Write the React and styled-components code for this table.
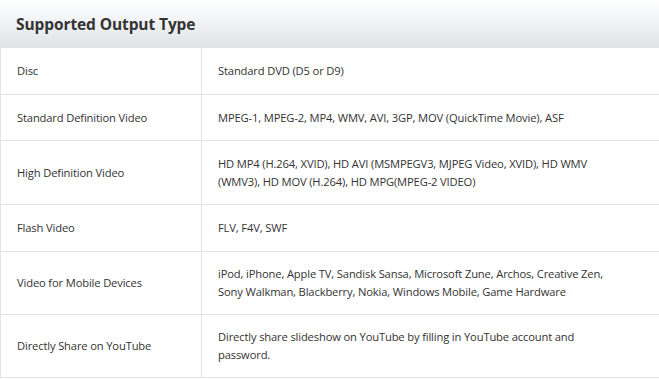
import React from 'react';
import styled, { createGlobalStyle } from 'styled-components';

const GlobalStyle = createGlobalStyle`
  html, body {
    margin: 0;
    padding: 0;
    background: #fff;
  }
`;

const rows = [
  { type: 'Disc', formats: 'Standard DVD (D5 or D9)', height: 47 },
  { type: 'Standard Definition Video', formats: 'MPEG-1, MPEG-2, MP4, WMV, AVI, 3GP, MOV (QuickTime Movie), ASF', height: 46 },
  { type: 'High Definition Video', formats: 'HD MP4 (H.264, XVID), HD AVI (MSMPEGV3, MJPEG Video, XVID), HD WMV (WMV3), HD MOV (H.264), HD MPG(MPEG-2 VIDEO)', height: 64 },
  { type: 'Flash Video', formats: 'FLV, F4V, SWF', height: 47 },
  { type: 'Video for Mobile Devices', formats: 'iPod, iPhone, Apple TV, Sandisk Sansa, Microsoft Zune, Archos, Creative Zen, Sony Walkman, Blackberry, Nokia, Windows Mobile, Game Hardware', height: 63 },
  { type: 'Directly Share on YouTube', formats: 'Directly share slideshow on YouTube by filling in YouTube account and password.', height: 63 },
];

const Wrapper = styled.div`
  width: 659px;
  font-family: "Open Sans", "DejaVu Sans", sans-serif;
  color: #333;
`;

const Header = styled.div`
  height: 48px;
  display: flex;
  align-items: center;
  padding: 0 16px;
  box-sizing: border-box;
  background: linear-gradient(to bottom, #ffffff 0%, #dfe3e6 100%);
  font-size: 15.5px;
  font-weight: 700;
  letter-spacing: -0.1px;
  color: #333;
`;

const Table = styled.div`
  border-left: 1px solid #e4e4e4;
`;

const Row = styled.div`
  display: grid;
  grid-template-columns: 200px 1fr;
  height: ${props => props.h}px;
  border-bottom: 1px solid #e4e4e4;
  box-sizing: border-box;
`;

const Cell = styled.div`
  display: flex;
  align-items: center;
  padding: 0 16px;
  font-size: 11.2px;
  letter-spacing: -0.15px;
  line-height: 18px;
`;

const ValueCell = styled(Cell)`
  padding-right: 48px;
  border-left: 1px solid #e4e4e4;
`;

export default function App() {
  return (
    <>
      <GlobalStyle />
      <Wrapper>
        <Header>Supported Output Type</Header>
        <Table>
          {rows.map(row => (
            <Row key={row.type} h={row.height}>
              <Cell>{row.type}</Cell>
              <ValueCell>{row.formats}</ValueCell>
            </Row>
          ))}
        </Table>
      </Wrapper>
    </>
  );
}
